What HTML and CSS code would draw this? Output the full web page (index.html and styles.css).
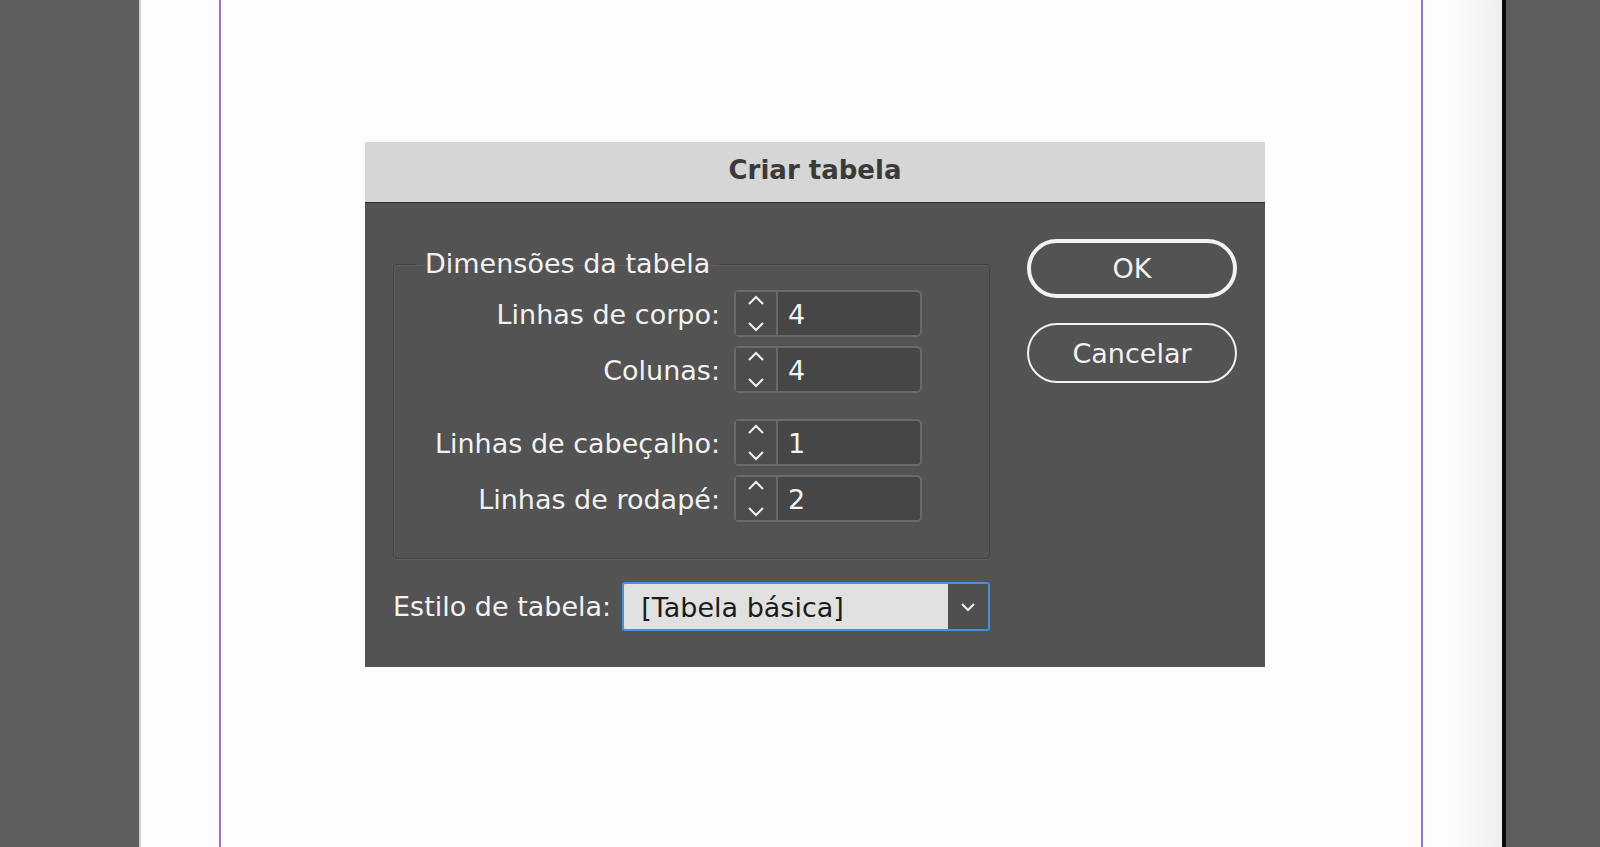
FILE: index.html
```html
<!DOCTYPE html>
<html lang="pt">
	<head>
		<meta charset="utf-8">
		<title>Criar tabela</title>
		<link rel="stylesheet" href="styles.css">
	</head>
	<body>
		<div class="gutter"></div>
		<div class="page">
			<div class="margins">
				<div class="dialog">
					<div class="titlebar">Criar tabela</div>
					<div class="dialog-body">
						<div class="main">
							<fieldset class="group">
								<legend>Dimensões da tabela</legend>
								<div class="row">
									<label>Linhas de corpo:</label>
									<div class="spin">
										<span class="arrows">
											<svg width="16" height="40" viewBox="0 0 16 40"><path d="M1 10 L8 3 L15 10 M1 29 L8 36 L15 29" fill="none" stroke="#f2f2f2" stroke-width="2"/></svg>
										</span>
										<span class="value">4</span>
									</div>
								</div>
								<div class="row">
									<label>Colunas:</label>
									<div class="spin">
										<span class="arrows">
											<svg width="16" height="40" viewBox="0 0 16 40"><path d="M1 10 L8 3 L15 10 M1 29 L8 36 L15 29" fill="none" stroke="#f2f2f2" stroke-width="2"/></svg>
										</span>
										<span class="value">4</span>
									</div>
								</div>
								<div class="row second">
									<label>Linhas de cabeçalho:</label>
									<div class="spin">
										<span class="arrows">
											<svg width="16" height="40" viewBox="0 0 16 40"><path d="M1 10 L8 3 L15 10 M1 29 L8 36 L15 29" fill="none" stroke="#f2f2f2" stroke-width="2"/></svg>
										</span>
										<span class="value">1</span>
									</div>
								</div>
								<div class="row">
									<label>Linhas de rodapé:</label>
									<div class="spin">
										<span class="arrows">
											<svg width="16" height="40" viewBox="0 0 16 40"><path d="M1 10 L8 3 L15 10 M1 29 L8 36 L15 29" fill="none" stroke="#f2f2f2" stroke-width="2"/></svg>
										</span>
										<span class="value">2</span>
									</div>
								</div>
							</fieldset>
							<div class="style-row">
								<label>Estilo de tabela:</label>
								<div class="select">
									<span class="select-text">[Tabela básica]</span>
									<span class="select-arrow">
										<svg width="16" height="10" viewBox="0 0 16 10"><path d="M2 2 L8 8 L14 2" fill="none" stroke="#f2f2f2" stroke-width="2"/></svg>
									</span>
								</div>
							</div>
						</div>
						<div class="buttons">
							<button type="button" class="btn btn-ok">OK</button>
							<button type="button" class="btn">Cancelar</button>
						</div>
					</div>
				</div>
			</div>
		</div>
	</body>
</html>
```

FILE: styles.css
```css
	body {
		margin: 0;
		height: 847px;
		overflow: hidden;
		display: flex;
		background: #5e5e5e;
		font-family: "DejaVu Sans", "Liberation Sans", sans-serif;
	}

	.gutter {
		width: 139px;
		border-right: 2px solid #cfcfcf;
	}

	.page {
		width: 1361px;
		background: #fdfdfd;
		border-right: 4px solid #0b0b0b;
		box-shadow: inset -60px 0 40px -40px #ececec;
	}

	.margins {
		margin-left: 78px;
		width: 1204px;
		height: 100%;
		border-left: 2px solid #9377c2;
		border-right: 2px solid #9377c2;
		padding: 142px 0 0 144px;
		box-sizing: border-box;
	}

	.dialog {
		width: 900px;
		height: 525px;
		background: #535353;
		display: flex;
		flex-direction: column;
	}

	.titlebar {
		height: 60px;
		background: #d6d6d6;
		border-bottom: 1px solid #2e2e2e;
		color: #3a3a3a;
		font-size: 26px;
		font-weight: bold;
		text-align: center;
		line-height: 56px;
	}

	.dialog-body {
		display: flex;
		padding: 36px 0 0 28px;
		color: #f2f2f2;
		font-size: 27px;
	}

	.main {
		width: 597px;
		padding-top: 9px;
	}

	.group {
		margin: 0;
		padding: 10px 67px 36px 0;
		border: 1px solid #444444;
		border-radius: 4px;
		box-shadow: inset 1px 1px 0 #5d5d5d, 0 1px 0 #5d5d5d;
	}

	.group legend {
		margin-left: 22px;
		padding: 0 9px;
		line-height: 32px;
	}

	.row {
		display: flex;
		justify-content: flex-end;
		align-items: center;
		gap: 14px;
		margin-bottom: 9px;
	}

	.row label {
		padding-top: 2px;
	}

	.row:last-child {
		margin-bottom: 0;
	}

	.row.second {
		margin-top: 26px;
	}

	.spin {
		width: 188px;
		height: 47px;
		box-sizing: border-box;
		border: 2px solid #6a6a6a;
		border-radius: 5px;
		background: #464646;
		display: flex;
	}

	.arrows {
		width: 40px;
		border-right: 2px solid #6a6a6a;
		background: #4c4c4c;
		display: flex;
		align-items: center;
		justify-content: center;
	}

	.value {
		padding-left: 10px;
		line-height: 45px;
	}

	.style-row {
		display: flex;
		align-items: center;
		gap: 11px;
		margin-top: 23px;
	}

	.style-row label {
		flex: none;
		white-space: nowrap;
	}

	.select {
		width: 370px;
		height: 49px;
		box-sizing: border-box;
		border: 2px solid #4a8ede;
		border-radius: 3px;
		display: flex;
		background: #e1e1e1;
	}

	.select-text {
		flex: 1;
		color: #1b1b1b;
		padding-left: 17px;
		line-height: 47px;
	}

	.select-arrow {
		width: 40px;
		background: #4f4f4f;
		display: flex;
		align-items: center;
		justify-content: center;
	}

	.buttons {
		margin-left: 37px;
		display: flex;
		flex-direction: column;
		gap: 25px;
	}

	.btn {
		width: 210px;
		height: 60px;
		border-radius: 30px;
		border: 2px solid #f2f2f2;
		background: transparent;
		color: #f2f2f2;
		font-family: inherit;
		font-size: 27px;
		padding: 0;
	}

	.btn-ok {
		border-width: 4px;
		height: 59px;
	}
```
